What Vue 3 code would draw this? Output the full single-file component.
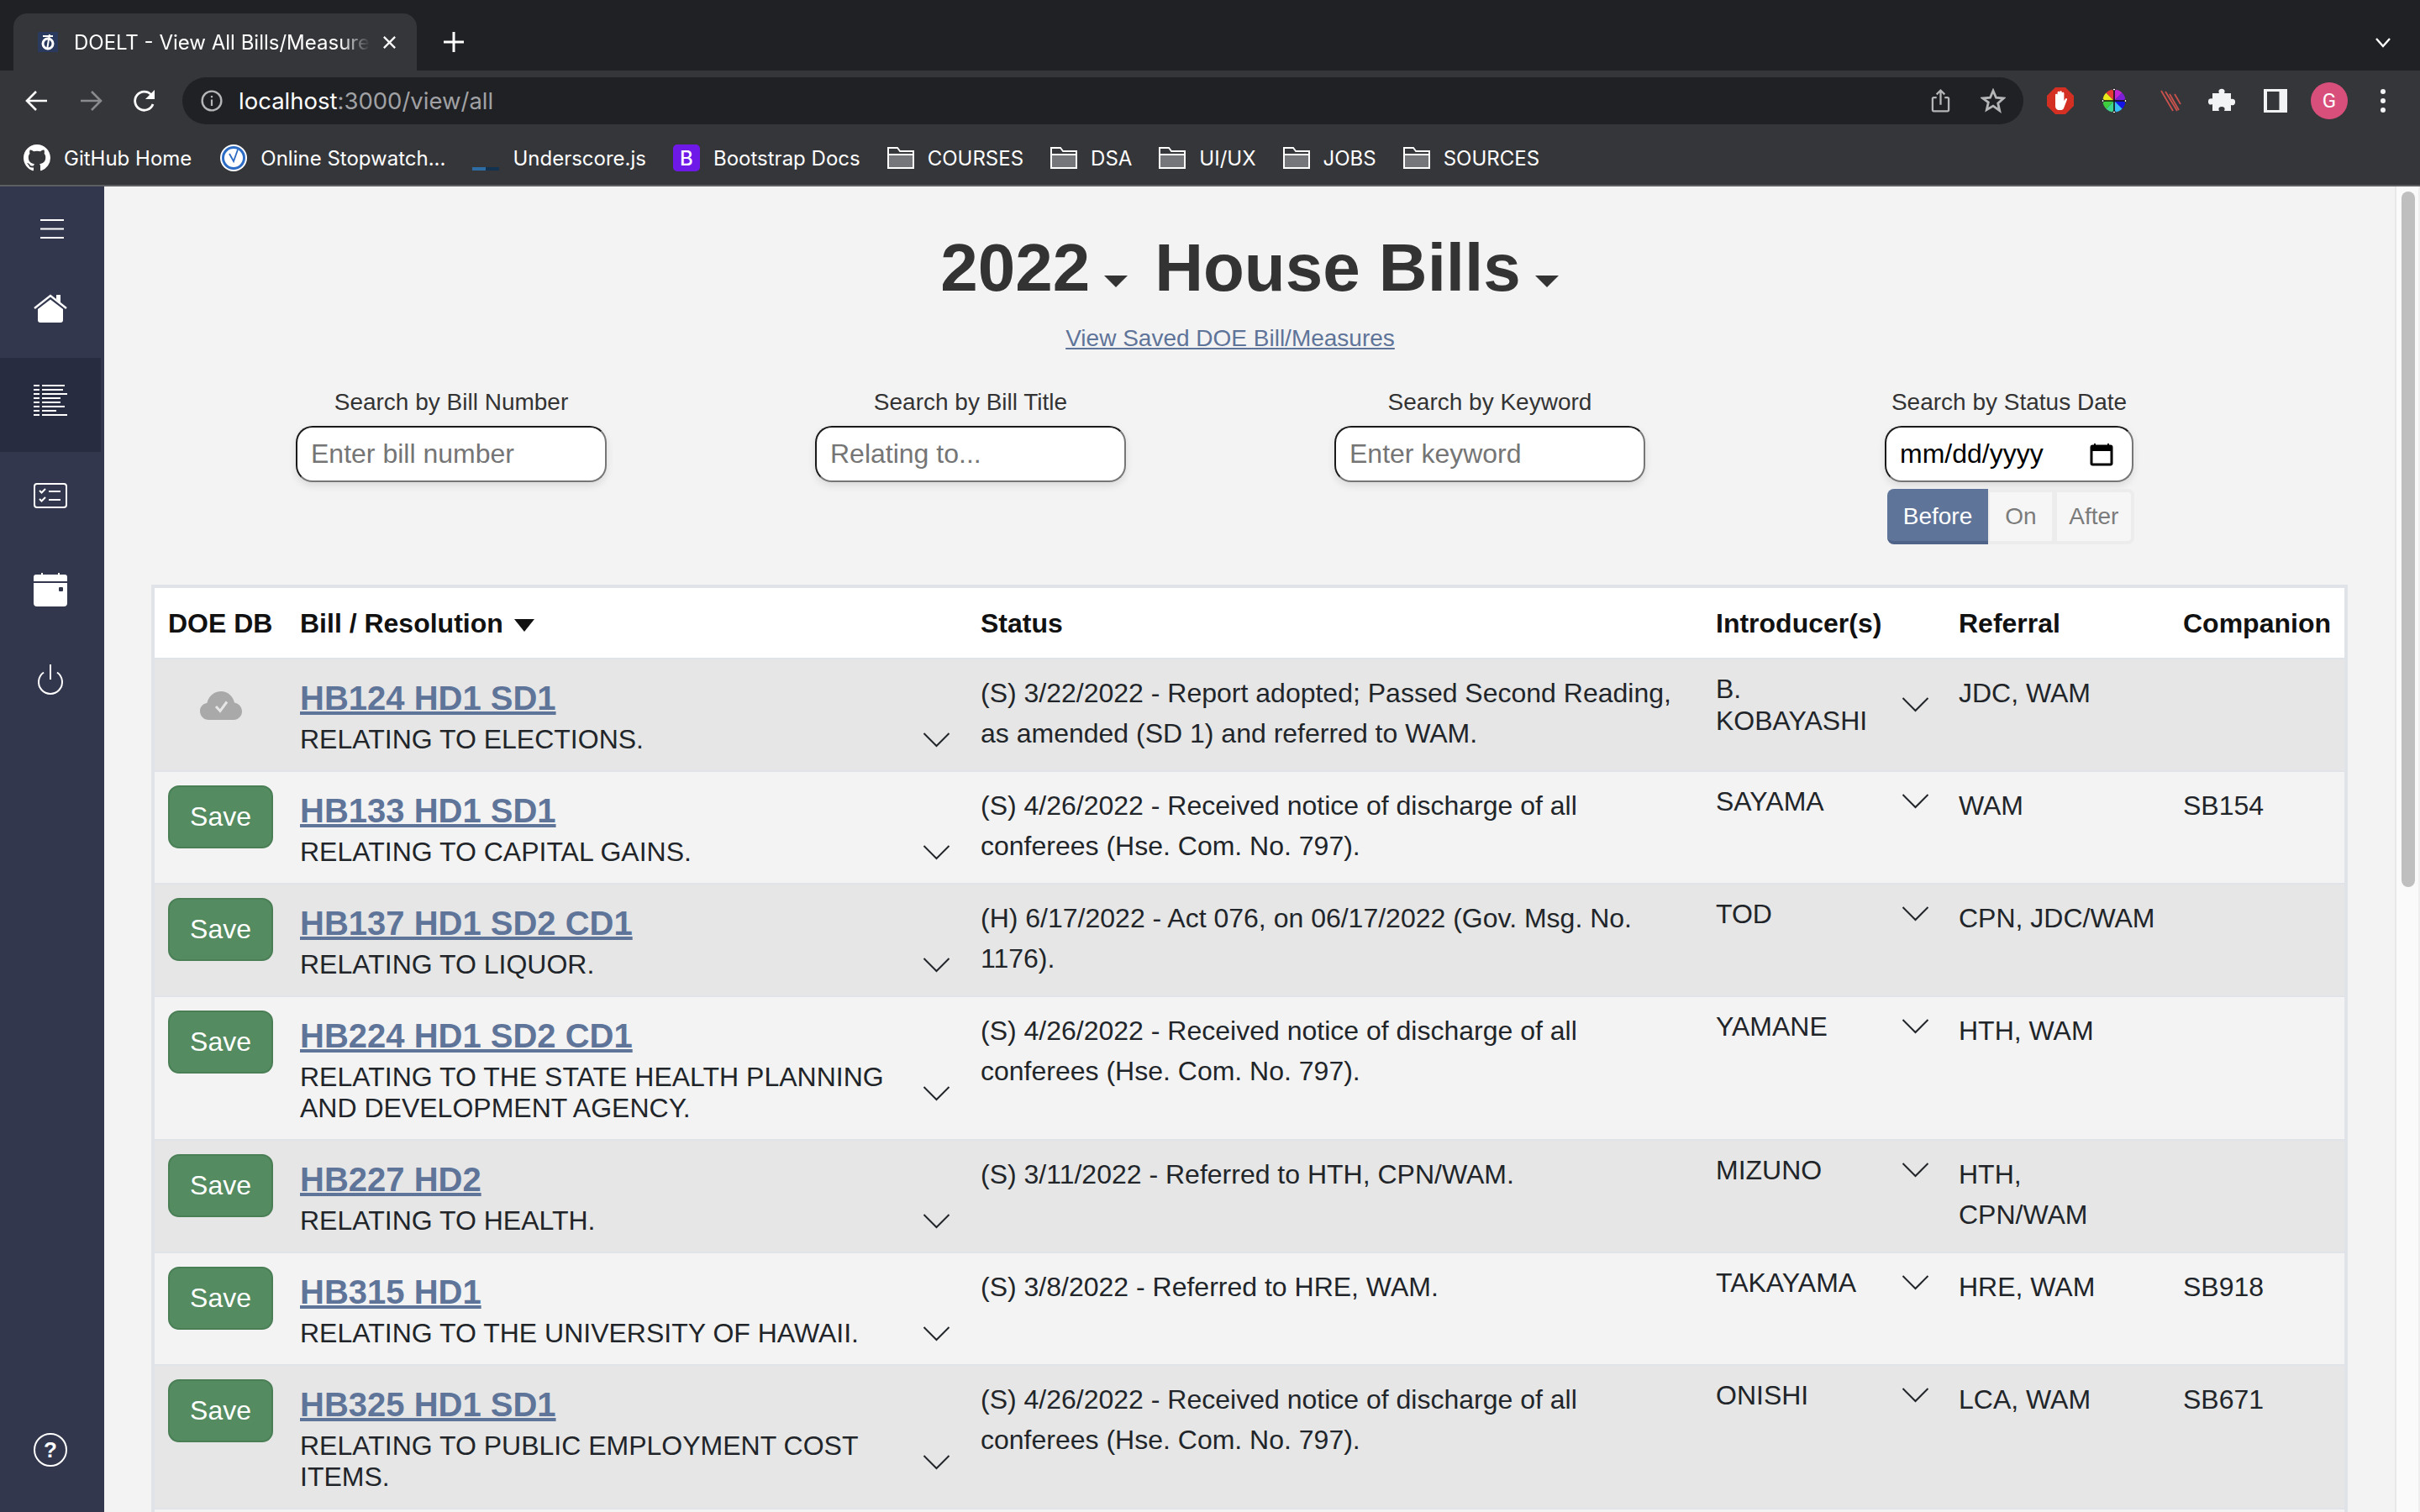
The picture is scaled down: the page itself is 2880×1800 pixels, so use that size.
<script setup>
const bookmarks = [
  { id: 'gh', label: 'GitHub Home' },
  { id: 'sw', label: 'Online Stopwatch...' },
  { id: 'us', label: 'Underscore.js' },
  { id: 'bs', label: 'Bootstrap Docs' },
  { id: 'f', label: 'COURSES' },
  { id: 'f', label: 'DSA' },
  { id: 'f', label: 'UI/UX' },
  { id: 'f', label: 'JOBS' },
  { id: 'f', label: 'SOURCES' }
]
const searches = [
  { label: 'Search by Bill Number', ph: 'Enter bill number' },
  { label: 'Search by Bill Title', ph: 'Relating to...' },
  { label: 'Search by Keyword', ph: 'Enter keyword' }
]
const rows = [
  { saved: true, bill: 'HB124 HD1 SD1', title: 'RELATING TO ELECTIONS.', status: '(S) 3/22/2022 - Report adopted; Passed Second Reading, as amended (SD 1) and referred to WAM.', intro: 'B. KOBAYASHI', ref: 'JDC, WAM', comp: '' },
  { bill: 'HB133 HD1 SD1', title: 'RELATING TO CAPITAL GAINS.', status: '(S) 4/26/2022 - Received notice of discharge of all conferees (Hse. Com. No. 797).', intro: 'SAYAMA', ref: 'WAM', comp: 'SB154' },
  { bill: 'HB137 HD1 SD2 CD1', title: 'RELATING TO LIQUOR.', status: '(H) 6/17/2022 - Act 076, on 06/17/2022 (Gov. Msg. No. 1176).', intro: 'TOD', ref: 'CPN, JDC/WAM', comp: '' },
  { bill: 'HB224 HD1 SD2 CD1', title: 'RELATING TO THE STATE HEALTH PLANNING AND DEVELOPMENT AGENCY.', status: '(S) 4/26/2022 - Received notice of discharge of all conferees (Hse. Com. No. 797).', intro: 'YAMANE', ref: 'HTH, WAM', comp: '' },
  { bill: 'HB227 HD2', title: 'RELATING TO HEALTH.', status: '(S) 3/11/2022 - Referred to HTH, CPN/WAM.', intro: 'MIZUNO', ref: 'HTH, CPN/WAM', comp: '' },
  { bill: 'HB315 HD1', title: 'RELATING TO THE UNIVERSITY OF HAWAII.', status: '(S) 3/8/2022 - Referred to HRE, WAM.', intro: 'TAKAYAMA', ref: 'HRE, WAM', comp: 'SB918' },
  { bill: 'HB325 HD1 SD1', title: 'RELATING TO PUBLIC EMPLOYMENT COST ITEMS.', status: '(S) 4/26/2022 - Received notice of discharge of all conferees (Hse. Com. No. 797).', intro: 'ONISHI', ref: 'LCA, WAM', comp: 'SB671' }
]
</script>

<template>
  <div class="screen">
    <header class="chrome">
      <div class="tabstrip">
        <div class="tab">
          <svg class="favicon" viewBox="0 0 24 24"><rect width="24" height="24" fill="#2a3a5e"/><circle cx="12" cy="14" r="6" fill="none" stroke="#fff" stroke-width="3"/><path d="M6 5h12M14 3l-3 18" stroke="#fff" stroke-width="2"/></svg>
          <span class="tab-title">DOELT - View All Bills/Measures</span>
          <svg class="tab-x" viewBox="0 0 18 18"><path d="M2 2l14 14M16 2L2 16" stroke="#fff" stroke-width="2.4"/></svg>
        </div>
        <svg class="newtab" viewBox="0 0 24 24"><path d="M12 0v24M0 12h24" stroke="#fff" stroke-width="3"/></svg>
        <svg class="tabs-menu" viewBox="0 0 18 12"><path d="M1 1l8 9 8-9" fill="none" stroke="#fff" stroke-width="2.4"/></svg>
      </div>
      <div class="toolbar">
        <svg class="nav" viewBox="0 0 28 28"><path d="M26 14H4M13 3L2 14l11 11" fill="none" stroke="#fff" stroke-width="2.6"/></svg>
        <svg class="nav" viewBox="0 0 28 28"><path d="M2 14h22M15 3l11 11-11 11" fill="none" stroke="#8a8b8d" stroke-width="2.6"/></svg>
        <svg class="nav" viewBox="0 0 28 28"><path d="M24 18a11 11 0 1 1-2-11" fill="none" stroke="#fff" stroke-width="2.8"/><path d="M26 1v11H15z" fill="#fff"/></svg>
        <div class="omnibox">
          <svg class="info" viewBox="0 0 24 24"><circle cx="12" cy="12" r="10.500" fill="none" stroke="#b5b6b8" stroke-width="2.2"/><path d="M12 10.500v7M12 6.500v2" stroke="#b5b6b8" stroke-width="2"/></svg>
          <span class="url"><span class="host">localhost</span>:3000/view/all</span>
          <svg class="omni-ic share" viewBox="0 0 24 30"><path d="M7 11H3.500a1.500 1.500 0 0 0-1.500 1.500v14A1.500 1.500 0 0 0 3.500 28h17a1.500 1.500 0 0 0 1.500-1.500v-14a1.500 1.500 0 0 0-1.500-1.500H17M12 20V2M7 7l5-5 5 5" fill="none" stroke="#b5b6b8" stroke-width="2.4"/></svg>
          <svg class="omni-ic star" viewBox="0 0 30 30"><path d="M15 3l3.500 8.200 8.900.8-6.700 5.900 2 8.700L15 21.100 7.300 25.600l2-8.700L2.600 12l8.900-.8z" fill="none" stroke="#b5b6b8" stroke-width="2.8"/></svg>
        </div>
        <div class="extensions">
          <svg class="ext" viewBox="0 0 32 32"><path d="M10 0h12l10 10v12L22 32H10L0 22V10z" fill="#d32f23"/><path d="M10 15V9a1.300 1.300 0 0 1 2.600 0V6a1.300 1.300 0 0 1 2.600 0v-.5a1.300 1.300 0 0 1 2.600 0V7a1.300 1.300 0 0 1 2.600 0v9l1.700-2.500c1-1.200 2.500 0 1.800 1.300L20 25c-.8 1.500-2 2-3.500 2h-2c-2.500 0-4.500-2-4.500-5z" fill="#fff"/></svg>
          <svg class="ext" viewBox="0 0 32 32"><defs><clipPath id="wheel"><circle cx="16" cy="16" r="13.500"/></clipPath></defs><g clip-path="url(#wheel)"><path d="M16 16L16 0H32z" fill="#c026d3"/><path d="M16 16L32 0V16z" fill="#7c1fd6"/><path d="M16 16H32V32z" fill="#1414e6"/><path d="M16 16L32 32H16z" fill="#38bdf8"/><path d="M16 16V32H0z" fill="#3dd68c"/><path d="M16 16L0 32V16z" fill="#3ecf3e"/><path d="M16 16H0V0z" fill="#e8e81a"/><path d="M16 16L0 0H16z" fill="#e53935"/></g><path d="M16 2v28M2 16h28" stroke="#111" stroke-width="1.600"/><g fill="#fff" stroke="#111" stroke-width="1"><circle cx="16" cy="2.500" r="1.500"/><circle cx="16" cy="29.500" r="1.500"/><circle cx="2.500" cy="16" r="1.500"/><circle cx="29.500" cy="16" r="1.500"/></g></svg>
          <svg class="ext ext-streak" viewBox="0 0 32 32"><path d="M4 4l14 24M9 5l14 23M14 8l11 19M20 8l7 12" stroke="#c9524d" stroke-width="1.800"/></svg>
          <svg class="ext" viewBox="0 0 32 32"><path d="M13 3a4 4 0 0 1 6 0c1 1 .500 3 0 4h8v7c1-.500 3-.500 4 .500 1.500 1.500 1.500 4.500 0 6-1 1-3 1-4 .500V28h-8c.500-1 1-3 0-4-1.500-1.500-4.500-1.500-6 0-1 1-.500 3 0 4H5v-8c-1 .500-3 1-4 0-1.500-1.500-1.500-4.500 0-6 1-1 3-1 4-.500V7h8c-.500-1-1-3 0-4z" fill="#f1f3f4"/></svg>
          <svg class="ext ext-panel" viewBox="0 0 32 32"><path fill-rule="evenodd" d="M2 2h28v28H2zM6 5v22h14.500V5z" fill="#f1f3f4"/></svg>
          <span class="avatar">G</span>
          <svg class="kebab" viewBox="0 0 8 32"><circle cx="4" cy="5" r="3" fill="#f1f3f4"/><circle cx="4" cy="16" r="3" fill="#f1f3f4"/><circle cx="4" cy="27" r="3" fill="#f1f3f4"/></svg>
        </div>
      </div>
      <div class="bookmarks">
        <div v-for="b in bookmarks" :key="b.label" class="bookmark" :class="'bm-' + b.id">
          <svg v-if="b.id === 'gh'" class="bm-ic" viewBox="0 0 16 16"><path fill="#fff" d="M8 0C3.580 0 0 3.580 0 8c0 3.540 2.290 6.530 5.470 7.590.4.070.55-.17.55-.38 0-.19-.01-.82-.01-1.490-2.010.37-2.530-.49-2.690-.94-.09-.23-.48-.94-.82-1.130-.28-.15-.68-.52-.01-.53.63-.01 1.080.58 1.230.82.720 1.210 1.870.87 2.330.66.070-.52.280-.87.510-1.070-1.780-.2-3.640-.89-3.640-3.950 0-.87.310-1.590.820-2.150-.08-.2-.36-1.020.080-2.120 0 0 .67-.21 2.200.82.640-.18 1.320-.27 2-.27s1.360.09 2 .27c1.530-1.040 2.200-.82 2.200-.82.440 1.100.160 1.920.080 2.120.51.560.820 1.270.820 2.150 0 3.070-1.870 3.750-3.650 3.950.29.250.54.730.54 1.480 0 1.070-.01 1.930-.01 2.200 0 .21.150.46.550.38A8.010 8.010 0 0 0 16 8c0-4.420-3.580-8-8-8z"/></svg>
          <svg v-else-if="b.id === 'sw'" class="bm-ic" viewBox="0 0 32 32"><circle cx="16" cy="16" r="16" fill="#fff"/><circle cx="16" cy="16" r="12.500" fill="none" stroke="#2d6cc4" stroke-width="3"/><path d="M11 11l5 9 5-14" fill="none" stroke="#2d6cc4" stroke-width="1.800"/></svg>
          <svg v-else-if="b.id === 'us'" class="bm-ic" viewBox="0 0 32 32"><rect x="0" y="27" width="16" height="4" fill="#2e6da4"/><rect x="16" y="27" width="16" height="4" fill="#12324f"/></svg>
          <svg v-else-if="b.id === 'bs'" class="bm-ic" viewBox="0 0 32 32"><rect width="32" height="32" rx="5" fill="#6f19e8"/><text x="16" y="25" text-anchor="middle" class="bs-letter">B</text></svg>
          <svg v-else class="bm-ic" viewBox="0 0 32 26"><path d="M1 25V1h11l3 4h16v20z" fill="#75767a" stroke="#fff" stroke-width="2"/><path d="M2 2h9.500l3 4H30v3H2z" fill="#36373b"/><path d="M1 9h30" stroke="#fff" stroke-width="2"/></svg>
          <span>{{ b.label }}</span>
        </div>
      </div>
    </header>

    <div class="body">
      <nav class="sidebar">
        <div class="side-item menu">
          <svg class="ic-menu" viewBox="0 0 28 25"><path d="M0 2h28M0 12.500h28M0 23h28" stroke="#fff" stroke-width="2"/></svg>
        </div>
        <div class="side-item home">
          <svg class="ic-home" viewBox="0 0 40 34"><path d="M1 17L20 2l19 15" fill="none" stroke="#fff" stroke-width="2.400"/><path d="M27 6V1h5v10z" fill="#fff"/><path d="M5 18L20 6.500 35 18v13a3 3 0 0 1-3 3H8a3 3 0 0 1-3-3z" fill="#fff"/></svg>
        </div>
        <div class="side-item active">
          <svg class="ic-list" viewBox="0 0 40 38"><g stroke="#fff" stroke-width="2"><path d="M0 1h7M10 1h27M0 6h7M10 6h25M0 11h7M10 11h30M0 16h7M10 16h22M0 21h7M10 21h22M0 26h7M10 26h27M0 31h7M10 31h17M0 36h7M10 36h30"/></g></svg>
        </div>
        <div class="side-item tasks">
          <svg class="ic-tasks" viewBox="0 0 40 30"><rect x="1" y="1" width="38" height="28" rx="3" fill="none" stroke="#fff" stroke-width="2"/><path d="M7 9l2.500 2.500L14 7M7 19l2.500 2.500L14 17" fill="none" stroke="#fff" stroke-width="2"/><path d="M18 10h14M18 20h14" stroke="#fff" stroke-width="2"/></svg>
        </div>
        <div class="side-item cal">
          <svg class="ic-cal" viewBox="0 0 40 40"><path d="M3 2h6V0h2v2h18V0h2v2h6a3 3 0 0 1 3 3v5H0V5a3 3 0 0 1 3-3zM0 12h40v24a4 4 0 0 1-4 4H4a4 4 0 0 1-4-4z" fill="#fff"/><rect x="30" y="17" width="5" height="5" rx="1" fill="#32374e"/></svg>
        </div>
        <div class="side-item power">
          <svg class="ic-power" viewBox="0 0 32 36"><path d="M16 0v18" stroke="#fff" stroke-width="2"/><path d="M8 9.500A14 14 0 1 0 24 9.500" fill="none" stroke="#fff" stroke-width="2"/></svg>
        </div>
        <div class="side-spacer"></div>
        <div class="help">
          <span class="help-ring">?</span>
        </div>
      </nav>

      <main class="main">
        <h1 class="title">
          <span>2022</span><i class="caret"></i>
          <span class="title-b">House Bills</span><i class="caret"></i>
        </h1>
        <div class="saved-wrap"><a class="saved">View Saved DOE Bill/Measures</a></div>

        <section class="filters">
          <div v-for="s in searches" :key="s.label" class="filter">
            <label>{{ s.label }}</label>
            <input class="field" type="text" :placeholder="s.ph" />
          </div>
          <div class="filter">
            <label>Search by Status Date</label>
            <div class="field date">
              <span>mm/dd/yyyy</span>
              <svg class="date-ic" viewBox="0 0 28 28"><path d="M6 1v4M22 1v4" stroke="#000" stroke-width="2"/><rect x="2" y="4" width="24" height="22" rx="1.500" fill="none" stroke="#000" stroke-width="3"/><rect x="2" y="4" width="24" height="6" fill="#000"/></svg>
            </div>
            <div class="toggle">
              <span class="tg on-state">Before</span>
              <span class="tg">On</span>
              <span class="tg">After</span>
            </div>
          </div>
        </section>

        <table class="bills">
          <colgroup>
            <col class="c1" /><col class="c2" /><col class="c3" /><col class="c4" /><col class="c5" /><col class="c6" />
          </colgroup>
          <thead>
            <tr>
              <th>DOE DB</th>
              <th>Bill / Resolution <i class="th-caret"></i></th>
              <th>Status</th>
              <th>Introducer(s)</th>
              <th>Referral</th>
              <th>Companion</th>
            </tr>
          </thead>
          <tbody>
            <tr v-for="r in rows" :key="r.bill">
              <td>
                <svg v-if="r.saved" class="cloud" viewBox="0 0 50 34"><path d="M11 34C4 34 0 29 0 23.500 0 18 4 14.500 8.500 14 10 6 17 0 25 0c8 0 14.500 6 16 13.500 5 1 9 5 9 10.500 0 5.500-4.500 10-10 10z" fill="#a9a9a9"/><path d="M19 18l5 5.500 8-11" fill="none" stroke="#e6e6e6" stroke-width="3"/></svg>
                <button v-else class="save">Save</button>
              </td>
              <td>
                <div class="bill-cell">
                  <div class="bill-text">
                    <a class="bill-link">{{ r.bill }}</a>
                    <div class="bill-title">{{ r.title }}</div>
                  </div>
                  <svg class="chev bill-chev" viewBox="0 0 32 18"><path d="M1 1l15 15L31 1" fill="none" stroke="#212529" stroke-width="2"/></svg>
                </div>
              </td>
              <td>{{ r.status }}</td>
              <td>
                <div class="intro-cell">
                  <span class="intro">{{ r.intro }}</span>
                  <svg class="chev intro-chev" viewBox="0 0 32 18"><path d="M1 1l15 15L31 1" fill="none" stroke="#212529" stroke-width="2"/></svg>
                </div>
              </td>
              <td class="ref">{{ r.ref }}</td>
              <td>{{ r.comp }}</td>
            </tr>
            <tr class="stub"><td colspan="6"></td></tr>
          </tbody>
        </table>
      </main>
      <div class="scrollbar"><div class="thumb"></div></div>
    </div>
  </div>
</template>

<style>
html, body { margin: 0; padding: 0; background: #f3f3f3; overflow: hidden; }
</style>

<style scoped>
.screen { width: 2880px; height: 1800px; display: flex; flex-direction: column; overflow: hidden; font-family: "Liberation Sans", Arial, sans-serif; color: #212529; }
.chrome { height: 222px; flex: none; background: #35363a; display: flex; flex-direction: column; border-bottom: 2px solid #5e5f62; box-sizing: border-box; font-family: Inter, "Noto Sans", sans-serif; color: #fff; }
.tabstrip { height: 84px; flex: none; background: #202124; display: flex; align-items: flex-end; position: relative; padding-left: 16px; }
.tab { width: 480px; height: 68px; box-sizing: border-box; background: #35363a; border-radius: 16px 16px 0 0; display: flex; align-items: center; padding: 0 24px 0 29px; }
.favicon { width: 24px; height: 24px; flex: none; margin-right: 19px; }
.tab-title { font-size: 24px; flex: 1; min-width: 0; white-space: nowrap; overflow: hidden; -webkit-mask-image: linear-gradient(90deg, #000 90%, transparent); mask-image: linear-gradient(90deg, #000 90%, transparent); }
.tab-x { width: 17px; height: 17px; flex: none; margin-left: 15px; }
.newtab { width: 24px; height: 24px; margin: 0 0 22px 32px; }
.tabs-menu { width: 18px; height: 12px; position: absolute; right: 35px; top: 45px; }
.toolbar { height: 72px; flex: none; display: flex; align-items: center; padding: 0 12px 0 30px; }
.nav { width: 28px; height: 28px; flex: none; margin-right: 36px; }
.nav:nth-child(3) { margin-right: 31px; }
.omnibox { width: 2191px; height: 56px; box-sizing: border-box; background: #202124; border-radius: 28px; display: flex; align-items: center; padding: 0 21px 0 22px; flex: none; }
.info { width: 26px; height: 26px; flex: none; margin-right: 19px; }
.url { font-size: 27.500px; color: #a0a1a4; flex: 1; }
.host { color: #fff; }
.omni-ic { flex: none; }
.share { width: 23px; height: 30px; margin-right: 36px; }
.star { width: 30px; height: 30px; }
.extensions { display: flex; align-items: center; margin-left: 28px; flex: none; }
.ext { width: 32px; height: 32px; margin-right: 32px; flex: none; }
.ext-streak { margin: 0 28px 0 4px; }
.ext-panel { margin-right: 26px; }
.avatar { width: 44px; height: 44px; border-radius: 50%; background: #d94f7c; color: #fff; font-size: 24px; display: flex; align-items: center; justify-content: center; font-family: Roboto, sans-serif; }
.kebab { width: 8px; height: 32px; margin-left: 38px; }
.bookmarks { height: 64px; flex: none; display: flex; align-items: center; padding-left: 28px; font-size: 24px; }
.bookmark { display: flex; align-items: center; margin-right: 32px; white-space: nowrap; }
.bm-gh { margin-right: 34px; }
.bm-ic { width: 32px; height: 32px; margin-right: 16px; flex: none; }
.bm-f .bm-ic { width: 32px; height: 26px; }
.bs-letter { font: 500 24px Inter, sans-serif; fill: #fff; }

.body { flex: 1; display: flex; min-height: 0; }
.sidebar { width: 124px; flex: none; box-sizing: border-box; padding-right: 4px; background: #32374e; display: flex; flex-direction: column; align-items: stretch; }
.side-item { display: flex; align-items: center; justify-content: center; flex: none; }
.menu { height: 100px; width: 124px; }
.home { height: 90px; margin-bottom: 14px; }
.active { background: #272c41; height: 112px; }
.tasks { height: 104px; }
.cal { height: 120px; }
.power { height: 94px; }
.ic-menu { width: 28px; height: 25px; }
.ic-home { width: 40px; height: 34px; }
.ic-list { width: 40px; height: 38px; margin-bottom: 10px; }
.ic-tasks { width: 40px; height: 30px; }
.ic-cal { width: 40px; height: 40px; }
.ic-power { width: 32px; height: 36px; }
.side-spacer { flex: 1; }
.help { height: 94px; flex: none; display: flex; align-items: flex-start; justify-content: center; }
.help-ring { width: 36px; height: 36px; border: 2px solid #fff; border-radius: 50%; display: flex; align-items: center; justify-content: center; color: #fff; font-size: 26px; font-weight: 700; }

.main { flex: 1; min-width: 0; box-sizing: border-box; padding: 0 0 0 56px; overflow: hidden; }
.title { margin: 51px 56px 0 0; font-size: 80px; line-height: 92px; font-weight: 700; color: #333; text-align: center; }
.title-b { margin-left: 32px; }
.caret { display: inline-block; width: 0; height: 0; border-left: 14px solid transparent; border-right: 14px solid transparent; border-top: 14px solid #333; margin-left: 17px; vertical-align: 4px; }
.saved-wrap { text-align: center; margin: 20px 102px 0 0; line-height: 36px; font-size: 28px; }
.saved { color: #5f7499; text-decoration: underline; font-size: 28px; }
.filters { display: grid; grid-template-columns: repeat(4, 618px); margin: 40px 0 48px 48px; }
.filter { display: flex; flex-direction: column; align-items: center; }
.filter label { font-size: 28px; line-height: 36px; margin-bottom: 10px; color: #333; }
.field { width: 370px; height: 67px; box-sizing: border-box; border-style: solid; border-width: 2px; border-color: #1a1a1a #767676 #767676 #1a1a1a; border-radius: 20px; background: #fff; padding: 0 16px; font: 32px "Liberation Sans", Arial, sans-serif; box-shadow: 0 4px 10px rgba(0,0,0,.1); outline: none; }
.field::placeholder { color: #757575; opacity: 1; }
.date { width: 296px; display: flex; align-items: center; justify-content: space-between; color: #000; padding-right: 22px; }
.date-ic { width: 28px; height: 28px; }
.toggle { display: flex; width: 294px; height: 66px; margin: 8px 0 0 4px; font-size: 28px; }
.tg { flex: 1; display: flex; align-items: center; justify-content: center; background: #f6f6f6; border: 4px solid #ececec; box-sizing: border-box; color: #7b7b7b; }
.tg:last-child { border-radius: 0 8px 8px 0; flex: 1.2; }
.tg + .tg { border-left-width: 2px; }
.on-state { flex: none; width: 120px; background: #5f7499; color: #fff; border: none; border-bottom: 4px solid #4f6388; padding-top: 4px; border-radius: 8px 0 0 8px; }

.bills { width: 2614px; border-collapse: separate; border-spacing: 0; table-layout: fixed; font-size: 32px; border: 4px solid #e0e3e8; box-sizing: border-box; }
.c1 { width: 157px; } .c2 { width: 810px; } .c3 { width: 875px; } .c4 { width: 289px; } .c5 { width: 267px; } .c6 { width: 208px; }
th { background: #fff; height: 83px; padding: 2px 0 0 16px; box-sizing: border-box; text-align: left; font-weight: 700; color: #111; white-space: nowrap; font-size: 32px; }
tbody tr:nth-child(odd) td { background: #e6e6e6; }
tbody tr:nth-child(even) td { background: #f3f3f3; }
td { padding: 16px; vertical-align: top; line-height: 48px; box-sizing: border-box; border-top: 2px solid #e0e3e8; }
td.ref { padding-right: 15px; }
.th-caret { display: inline-block; width: 0; height: 0; border-left: 12px solid transparent; border-right: 12px solid transparent; border-top: 15px solid #111; margin-left: 4px; vertical-align: 1px; }
.save { width: 125px; height: 75px; display: block; box-sizing: border-box; background: #548b60; border: 2px solid #4a7f56; border-radius: 13px; color: #fff; font: 32px "Liberation Sans", Arial, sans-serif; padding: 0; }
.cloud { width: 50px; height: 34px; display: block; margin: 22px auto 0; }
.bill-cell { display: flex; align-items: center; }
.bill-text { flex: 1; padding-bottom: 2px; }
.bill-link { font-size: 40px; font-weight: 700; color: #5f7499; text-decoration: underline; line-height: 48px; display: block; margin-top: 6px; }
.bill-title { line-height: 37px; margin-top: 7px; }
.chev { width: 33px; height: 18px; flex: none; }
.bill-chev { margin: 60px 4px 0 24px; }
.intro-cell { display: flex; justify-content: space-between; align-items: center; line-height: 38px; }
.intro-chev { margin-right: 3px; }
.intro { width: 170px; }
.stub td { height: 40px; padding: 0; }

.scrollbar { width: 30px; flex: none; background: #fafafa; border-left: 2px solid #e8e8e8; border-right: 2px solid #efefef; box-sizing: border-box; position: relative; }
.thumb { position: absolute; left: 6px; top: 6px; width: 16px; height: 828px; border-radius: 8px; background: #bfbfbf; }
</style>
